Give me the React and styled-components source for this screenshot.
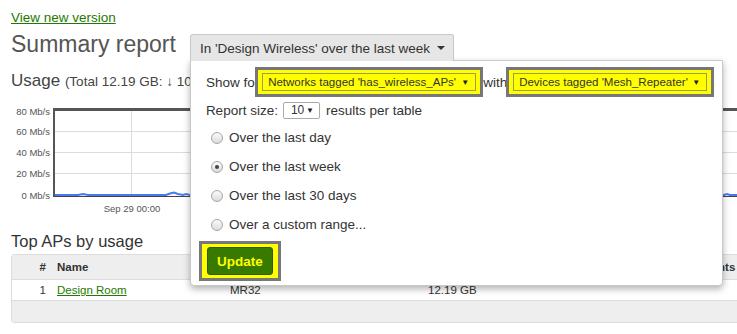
import styled, { createGlobalStyle } from "styled-components";

const GlobalStyle = createGlobalStyle`
  body {
    margin: 0;
    background: #fff;
    color: #333;
    font-family: "Liberation Sans", Arial, sans-serif;
    overflow: hidden;
  }
`;

const Page = styled.div`
  width: 790px;
  padding: 10px 0 0 11px;
`;

const NewVersionLink = styled.a`
  display: block;
  width: fit-content;
  font-size: 13.5px;
  line-height: 16px;
  color: #1f7a00;
  text-decoration: underline;
`;

const HeaderRow = styled.div`
  display: flex;
  align-items: flex-start;
  gap: 14px;
  margin-top: 4px;
`;

const Title = styled.h1`
  margin: 0;
  font-size: 23px;
  line-height: 28px;
  font-weight: normal;
  color: #555;
`;

const FilterMenu = styled.div`
  position: relative;
  margin-top: 4px;
  z-index: 2;
`;

const FilterButton = styled.button`
  position: relative;
  z-index: 2;
  display: flex;
  align-items: center;
  gap: 7px;
  height: 27px;
  padding: 0 8px 0 9px;
  border: 1px solid #c8c8c8;
  border-bottom: none;
  border-radius: 3px 3px 0 0;
  background: #e6e6e6;
  font: 13.5px "Liberation Sans", Arial, sans-serif;
  color: #333;
`;

const Caret = styled.span`
  width: 0;
  height: 0;
  border-left: 4px solid transparent;
  border-right: 4px solid transparent;
  border-top: 4px solid #333;
`;

const Popover = styled.div`
  position: absolute;
  top: calc(100% - 1px);
  left: 0;
  z-index: 1;
  width: 533px;
  box-sizing: border-box;
  padding: 6px 14px 4px 15px;
  background: #fff;
  border: 1px solid #c8c8c8;
  border-radius: 0 0 4px 4px;
  box-shadow: 0 3px 7px rgba(0, 0, 0, 0.3);
  font-size: 13.5px;
  color: #333;
`;

const FilterLine = styled.div`
  display: flex;
  align-items: center;
  height: ${(p) => p.$h}px;
  margin-top: ${(p) => p.$mt || 0}px;
  white-space: nowrap;
`;

const Highlight = styled.span`
  display: inline-flex;
  align-items: center;
  margin-left: ${(p) => p.$ml || 0}px;
  margin-top: ${(p) => p.$mt || 0}px;
  padding: 3px ${(p) => p.$px || 4}px;
  border: 3px solid #777;
  background: #ffff00;
`;

const TagSelect = styled.span`
  display: flex;
  align-items: center;
  justify-content: space-between;
  box-sizing: border-box;
  width: ${(p) => p.$w}px;
  height: 18px;
  padding: 0 6px 0 5px;
  border: 1px solid #9c9c52;
  background: #ffff00;
  font-size: 11.5px;
  color: #333;
`;

const SizeSelect = styled.span`
  display: flex;
  align-items: center;
  justify-content: space-between;
  box-sizing: border-box;
  width: 37px;
  height: 17px;
  margin: 0 6px 0 5px;
  padding: 0 5px 0 7px;
  border: 1px solid #aaa;
  border-radius: 2px;
  background: #fff;
  font-size: 12px;
`;

const Arrow = styled.span`
  font-size: 8px;
  color: #222;
`;

const RadioList = styled.div`
  margin-top: 4px;
`;

const RadioRow = styled.label`
  display: flex;
  align-items: center;
  gap: 6px;
  height: 29px;
  padding-left: 5px;
`;

const RadioDot = styled.span`
  position: relative;
  width: 12px;
  height: 12px;
  box-sizing: border-box;
  border-radius: 50%;
  border: 1px solid #a6a6a6;
  background: linear-gradient(#fafafa, #dcdcdc);

  &::after {
    content: "";
    display: ${(p) => (p.$checked ? "block" : "none")};
    position: absolute;
    left: 3px;
    top: 3px;
    width: 4px;
    height: 4px;
    border-radius: 50%;
    background: #444;
  }
`;

const UpdateButton = styled.button`
  width: 66px;
  height: 28px;
  border: 1px solid #2b5a00;
  border-radius: 3px;
  background: #387a00;
  color: #ffff00;
  font: bold 13.5px "Liberation Sans", Arial, sans-serif;
`;

const UsageHeading = styled.h2`
  margin: 10px 0 0;
  font-size: 17px;
  line-height: 20px;
  font-weight: normal;
  color: #444;
  white-space: nowrap;

  small {
    font-size: 13.5px;
  }
`;

const ChartBox = styled.svg`
  display: block;
  margin-top: 7px;
  margin-left: -11px;
`;

const SectionTitle = styled.h3`
  margin: 14px 0 0;
  font-size: 16.5px;
  line-height: 20px;
  font-weight: normal;
  color: #333;
`;

const Table = styled.div`
  margin-top: 3px;
  border: 1px solid #ddd;
  border-radius: 3px;
  font-size: 11.5px;
  color: #333;
  overflow: hidden;
`;

const TableRow = styled.div`
  display: grid;
  grid-template-columns: 34px 173px 198px 269px 100px;
  align-items: center;
  height: ${(p) => p.$h}px;
  background: ${(p) => (p.$shaded ? "#eee" : "#fff")};
  font-weight: ${(p) => (p.$head ? "bold" : "normal")};
  & + & {
    border-top: 1px solid #ddd;
  }
`;

const Cell = styled.div`
  padding-left: ${(p) => (p.$index ? 0 : 11)}px;
  text-align: ${(p) => (p.$index ? "right" : "left")};
  white-space: nowrap;
`;

const RowLink = styled.a`
  color: #1f7a00;
  text-decoration: underline;
`;

function UsageChart() {
  const labels = [
    ["80 Mb/s", 15.5],
    ["60 Mb/s", 36],
    ["40 Mb/s", 57],
    ["20 Mb/s", 78],
    ["0 Mb/s", 100],
  ];
  return (
    <ChartBox width="780" height="118" viewBox="0 0 780 118">
      {labels.map(([t, y]) => (
        <text key={t} x="50" y={y} textAnchor="end" fontSize="9.5" fill="#555" fontFamily="Liberation Sans, Arial, sans-serif">
          {t}
        </text>
      ))}
      {[32.5, 53.5, 74.5].map((y) => (
        <line key={y} x1="53" x2="780" y1={y} y2={y} stroke="#dcdcdc" />
      ))}
      <line x1="131.5" x2="131.5" y1="10" y2="96" stroke="#dcdcdc" />
      <line x1="53" x2="780" y1="10.5" y2="10.5" stroke="#555" strokeWidth="3" />
      <line x1="54" x2="54" y1="9" y2="97" stroke="#555" strokeWidth="2" />
      <line x1="53" x2="780" y1="97.5" y2="97.5" stroke="#444" />
      <polyline
        fill="none"
        stroke="#4a78f0"
        strokeWidth="2"
        points="55,96 78,96 83,95 88,96 166,96 170,94.5 174,93.5 178,95 183,96 186,95 190,96 724,96 727,95 730,96 780,96"
      />
      <text x="132" y="113" textAnchor="middle" fontSize="9.5" fill="#555" fontFamily="Liberation Sans, Arial, sans-serif">
        Sep 29 00:00
      </text>
    </ChartBox>
  );
}

const ranges = [
  ["Over the last day", false],
  ["Over the last week", true],
  ["Over the last 30 days", false],
  ["Over a custom range...", false],
];

export default function App() {
  return (
    <>
      <GlobalStyle />
      <Page>
        <NewVersionLink href="#">View new version</NewVersionLink>
        <HeaderRow>
          <Title>Summary report</Title>
          <FilterMenu>
            <FilterButton>
              In 'Design Wireless' over the last week
              <Caret />
            </FilterButton>
            <Popover>
              <FilterLine $h={30}>
                <span>Show for</span>
                <Highlight $ml={-4}>
                  <TagSelect $w={214}>
                    Networks tagged 'has_wireless_APs'
                    <Arrow>▼</Arrow>
                  </TagSelect>
                </Highlight>
                <span>with</span>
                <Highlight $ml={-1}>
                  <TagSelect $w={194}>
                    Devices tagged 'Mesh_Repeater'
                    <Arrow>▼</Arrow>
                  </TagSelect>
                </Highlight>
              </FilterLine>
              <FilterLine $h={18} $mt={4}>
                Report size:
                <SizeSelect>
                  10 <Arrow>▼</Arrow>
                </SizeSelect>
                results per table
              </FilterLine>
              <RadioList>
                {ranges.map(([label, checked]) => (
                  <RadioRow key={label}>
                    <RadioDot $checked={checked} />
                    {label}
                  </RadioRow>
                ))}
              </RadioList>
              <Highlight $ml={-7} $px={5} $mt={2}>
                <UpdateButton>Update</UpdateButton>
              </Highlight>
            </Popover>
          </FilterMenu>
        </HeaderRow>
        <UsageHeading>
          Usage <small>(Total 12.19 GB: ↓ 10.84 GB, ↑ 1.35 GB)</small>
        </UsageHeading>
        <UsageChart />
        <SectionTitle>Top APs by usage</SectionTitle>
        <Table>
          <TableRow $h={24} $shaded $head>
            <Cell $index>#</Cell>
            <Cell>Name</Cell>
            <Cell>Model</Cell>
            <Cell>Usage</Cell>
            <Cell>Clients</Cell>
          </TableRow>
          <TableRow $h={20}>
            <Cell $index>1</Cell>
            <Cell>
              <RowLink href="#">Design Room</RowLink>
            </Cell>
            <Cell>MR32</Cell>
            <Cell>12.19 GB</Cell>
            <Cell />
          </TableRow>
          <TableRow $h={21} $shaded />
        </Table>
      </Page>
    </>
  );
}
